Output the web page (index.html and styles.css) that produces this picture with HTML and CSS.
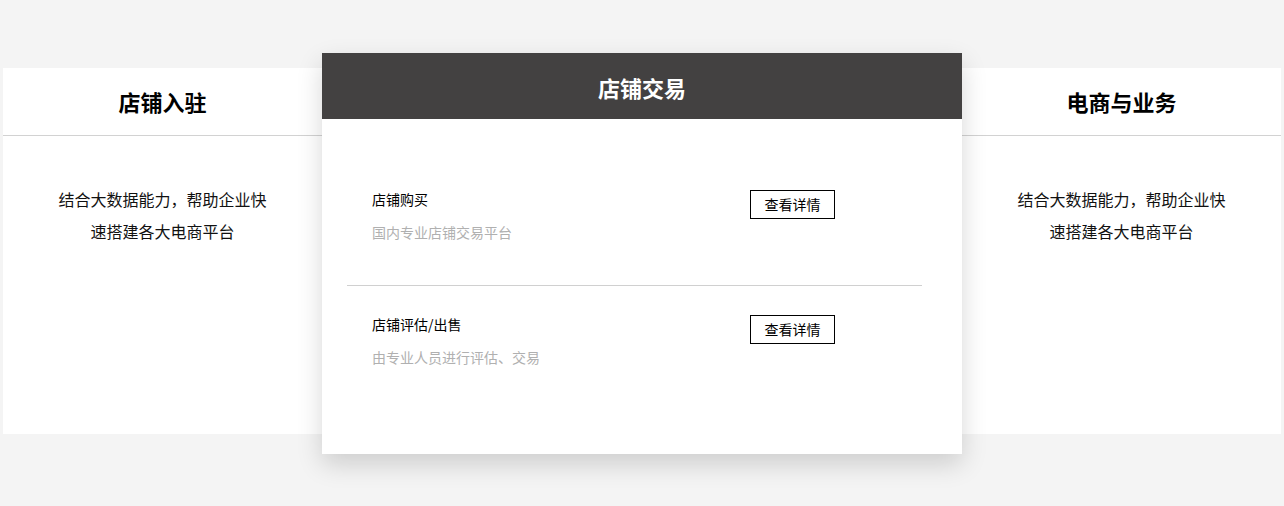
FILE: index.html
```html
<!DOCTYPE html>
<html>
<head>
	<title>店铺服务</title>
	<meta charset="utf-8">
	<link rel="stylesheet" href="styles.css">
</head>
<body>
	<div class="services">
		<div class="card side">
			<div class="cardhead">店铺入驻</div>
			<div class="sidetext">结合大数据能力，帮助企业快速搭建各大电商平台</div>
		</div>

		<div class="card main">
			<div class="cardhead dark">店铺交易</div>
			<div class="itemlist">
				<div class="item">
					<div class="iteminfo">
						<div class="itemtitle">店铺购买</div>
						<div class="itemdesc">国内专业店铺交易平台</div>
					</div>
					<a class="detailbtn" href="#">查看详情</a>
				</div>
				<div class="item">
					<div class="iteminfo">
						<div class="itemtitle">店铺评估/出售</div>
						<div class="itemdesc">由专业人员进行评估、交易</div>
					</div>
					<a class="detailbtn" href="#">查看详情</a>
				</div>
			</div>
		</div>

		<div class="card side">
			<div class="cardhead">电商与业务</div>
			<div class="sidetext">结合大数据能力，帮助企业快速搭建各大电商平台</div>
		</div>
	</div>
</body>
</html>
```

FILE: styles.css
```css
body {
	margin: 0;
	background-color: #F4F4F4;
	font-family: "Noto Sans CJK SC", "Liberation Sans", sans-serif;
	color: #111;
}
.services {
	display: flex;
	align-items: flex-start;
	padding: 53px 3px 52px;
}
.card {
	background-color: #FFF;
}
.card.side {
	width: 319px;
	height: 366px;
	margin-top: 15px;
}
.card.main {
	width: 640px;
	height: 401px;
	position: relative;
	z-index: 1;
	box-shadow: 0 10px 24px rgba(0, 0, 0, 0.16);
}
.cardhead {
	padding: 4px 0 1px;
	line-height: 61px;
	text-align: center;
	font-size: 22px;
	font-weight: bold;
	color: #000;
}
.side .cardhead {
	padding: 3px 0;
	line-height: 61px;
	border-bottom: 1px solid #D2D2D2;
}
.cardhead.dark {
	background-color: #434141;
	color: #FFF;
}
.sidetext {
	padding: 47px 50px 0;
	font-size: 16px;
	line-height: 32px;
	text-align: center;
	color: #111;
}
.itemlist {
	padding: 40px 40px 0 25px;
}
.item {
	display: flex;
	justify-content: space-between;
	align-items: flex-start;
	padding: 30px 87px 43px 25px;
}
.item + .item {
	padding-top: 28px;
	border-top: 1px solid #D0D0D0;
}
.itemtitle {
	font-size: 14px;
	line-height: 20px;
	color: #000;
}
.itemdesc {
	margin-top: 13px;
	font-size: 14px;
	line-height: 20px;
	color: #B0B0B0;
}
.detailbtn {
	display: block;
	box-sizing: border-box;
	width: 85px;
	margin-top: 1px;
	border: 1px solid #000;
	line-height: 27px;
	text-align: center;
	font-size: 14px;
	color: #000;
	text-decoration: none;
}
```
